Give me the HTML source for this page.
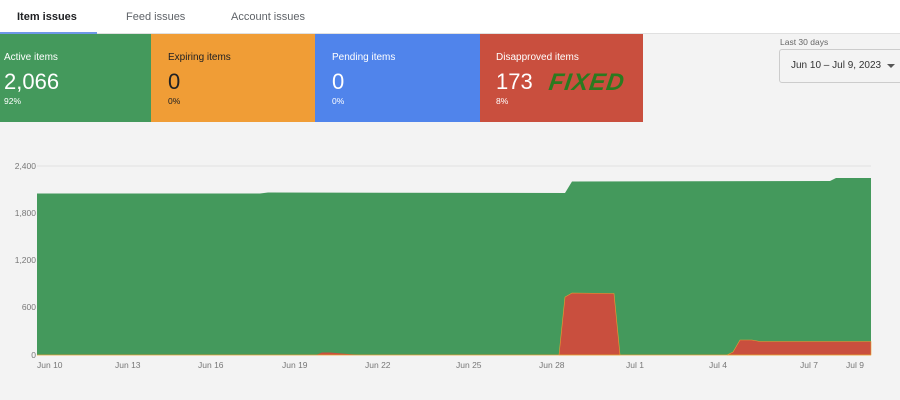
<!DOCTYPE html>
<html><head><style>
body{margin:0;width:900px;height:400px;background:#f3f3f3;font-family:"Liberation Sans",Arial,sans-serif;position:relative;overflow:hidden}
.tabs{position:absolute;left:0;top:0;width:900px;height:33px;background:#fff;border-bottom:1px solid #e0e0e0}
.tab{position:absolute;top:11px;font-size:11px;color:#5f6368}
.ul{position:absolute;left:0;top:32px;width:97px;height:2px;background:#6f97e8}
.card{position:absolute;top:34px;height:88px}
.card .l{position:absolute;left:0;top:18px;font-size:10px}
.card .n{position:absolute;left:0;top:35px;font-size:22px}
.card .p{position:absolute;left:0;top:62px;font-size:8.5px}
.ax{position:absolute;font-size:8.5px;color:#777}
</style></head><body>
<div class="tabs">
<div class="tab" style="left:17px;color:#202124;font-weight:bold">Item issues</div>
<div class="tab" style="left:126px">Feed issues</div>
<div class="tab" style="left:231px">Account issues</div>
<div class="ul"></div>
</div>
<div class="card" style="left:0;width:151px;background:#44995c;color:#fff"><div style="position:absolute;left:4px;top:0;right:0;bottom:0"><div class="l">Active items</div><div class="n">2,066</div><div class="p">92%</div></div></div>
<div class="card" style="left:151px;width:164px;background:#f09d36;color:#202124"><div style="position:absolute;left:17px;top:0;right:0;bottom:0"><div class="l">Expiring items</div><div class="n">0</div><div class="p">0%</div></div></div>
<div class="card" style="left:315px;width:165px;background:#5084eb;color:#fff"><div style="position:absolute;left:17px;top:0;right:0;bottom:0"><div class="l">Pending items</div><div class="n">0</div><div class="p">0%</div></div></div>
<div class="card" style="left:480px;width:163px;background:#c94f3e;color:#fff"><div style="position:absolute;left:16px;top:0;right:0;bottom:0"><div class="l">Disapproved items</div><div class="n">173</div><div class="p">8%</div>
<div style="position:absolute;left:53px;top:35px;font-size:24px;font-weight:900;font-style:italic;color:#2b7a1f;letter-spacing:1px;transform:skewX(-8deg)">FIXED</div></div></div>
<div style="position:absolute;left:780px;top:37px;font-size:8.5px;color:#666">Last 30 days</div>
<div style="position:absolute;left:779px;top:49px;width:130px;height:32px;border:1px solid #ccc;border-radius:3px;background:#f3f3f3"></div>
<div style="position:absolute;left:791px;top:60px;font-size:10px;color:#333">Jun 10 – Jul 9, 2023</div>
<div style="position:absolute;left:887px;top:64px;width:0;height:0;border-left:4px solid transparent;border-right:4px solid transparent;border-top:4px solid #555"></div>
<svg style="position:absolute;left:0;top:0" width="900" height="400">
<line x1="37" y1="166" x2="871" y2="166" stroke="#ddd" stroke-width="0.7"/>
<path d="M37 355 L37 193.5 L260 193.5 L268 192.5 L565 193 L572 181.5 L830 181 L836 178 L871 178 L871 355 Z" fill="#44995c"/>
<path d="M559 355 L565 297 L572 293 L614 293.5 L620 355 Z" fill="#c94f3e" stroke="#e8a030" stroke-width="0.6"/>
<path d="M727 355 L733 352 L740 340 L752 340 L760 341.5 L871 341.5 L871 355 Z" fill="#c94f3e" stroke="#e8a030" stroke-width="0.6"/>
<path d="M316 355 L322 352.5 L330 352.5 L360 355 Z" fill="#c94f3e"/>
<line x1="37" y1="355" x2="871" y2="355" stroke="#e8a030" stroke-width="0.8"/>
</svg>
<div class="ax" style="right:864px;top:161px">2,400</div>
<div class="ax" style="right:864px;top:208px">1,800</div>
<div class="ax" style="right:864px;top:255px">1,200</div>
<div class="ax" style="right:864px;top:302px">600</div>
<div class="ax" style="right:864px;top:350px">0</div>
<div class="ax" style="left:37px;top:360px">Jun 10</div>
<div class="ax" style="left:115px;top:360px">Jun 13</div>
<div class="ax" style="left:198px;top:360px">Jun 16</div>
<div class="ax" style="left:282px;top:360px">Jun 19</div>
<div class="ax" style="left:365px;top:360px">Jun 22</div>
<div class="ax" style="left:456px;top:360px">Jun 25</div>
<div class="ax" style="left:539px;top:360px">Jun 28</div>
<div class="ax" style="left:626px;top:360px">Jul 1</div>
<div class="ax" style="left:709px;top:360px">Jul 4</div>
<div class="ax" style="left:800px;top:360px">Jul 7</div>
<div class="ax" style="left:846px;top:360px">Jul 9</div>
</body></html>
